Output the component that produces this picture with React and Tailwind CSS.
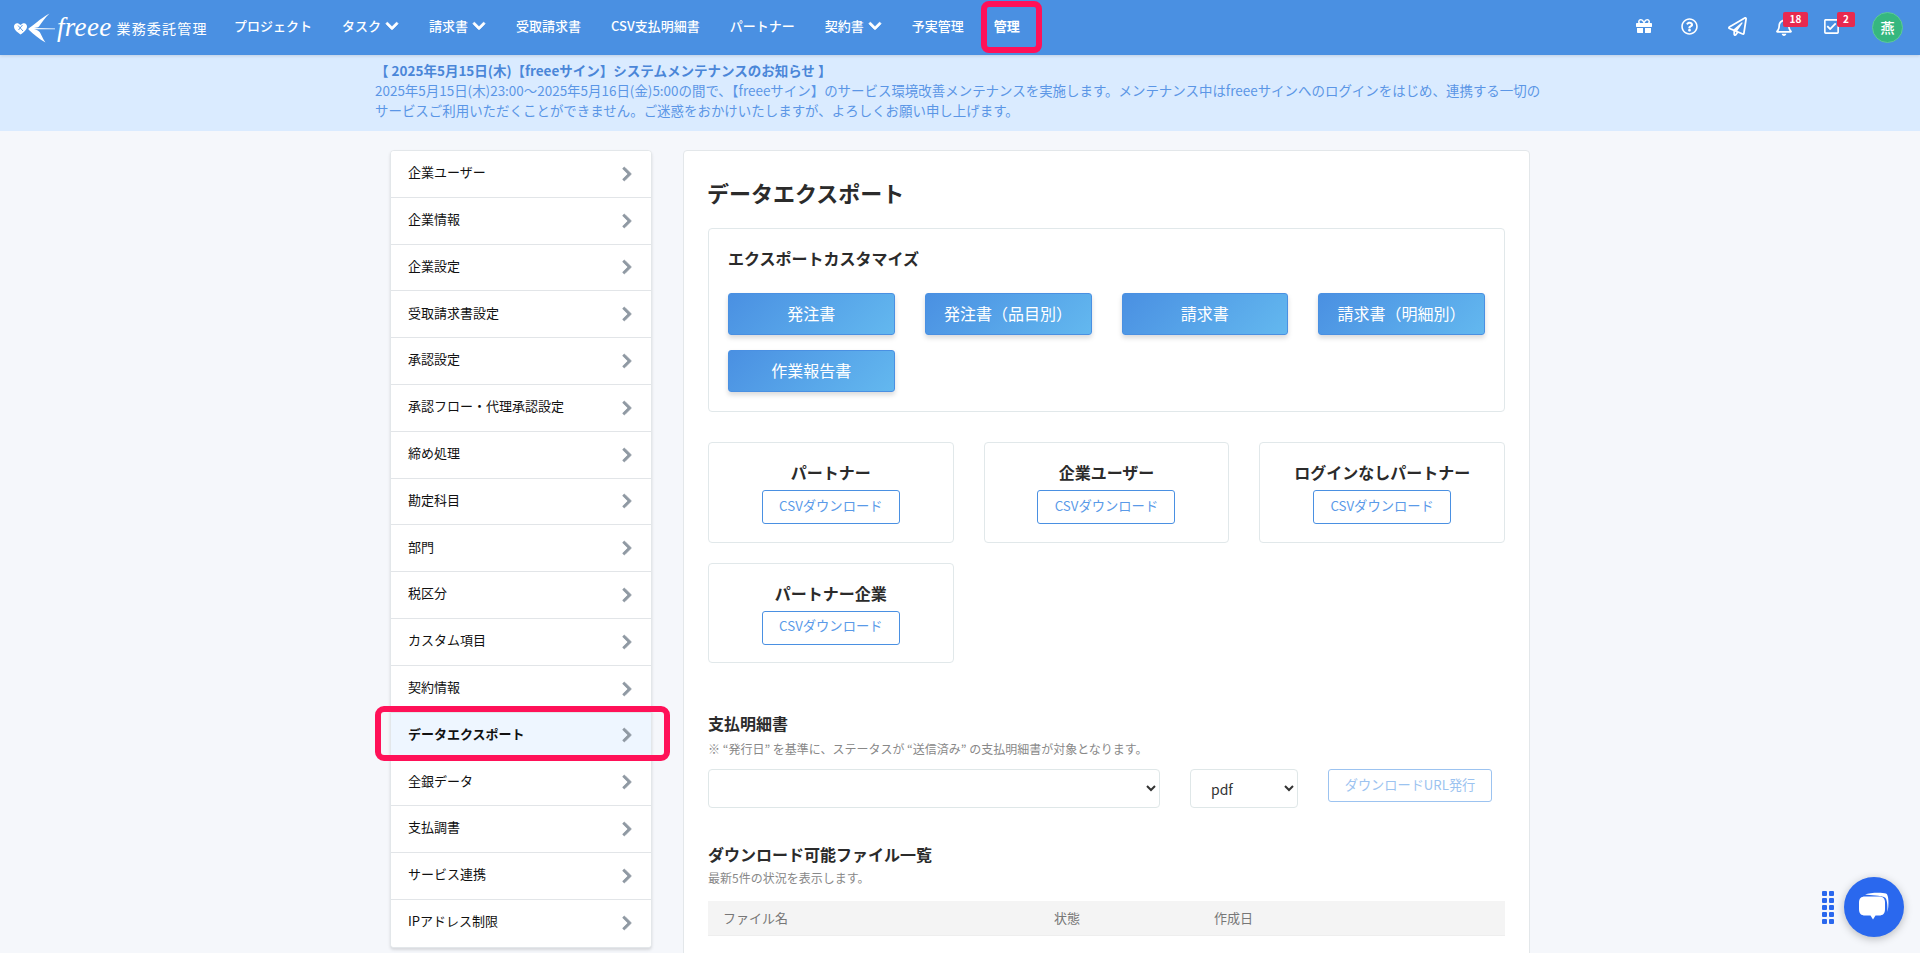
import { FaChevronDown, FaChevronRight, FaGift, FaRegQuestionCircle, FaRegPaperPlane, FaRegBell, FaRegCheckSquare } from 'react-icons/fa';

const NAV = [
  { label: 'プロジェクト' },
  { label: 'タスク', caret: true },
  { label: '請求書', caret: true },
  { label: '受取請求書' },
  { label: 'CSV支払明細書' },
  { label: 'パートナー' },
  { label: '契約書', caret: true },
  { label: '予実管理' },
  { label: '管理', bold: true },
];

const SIDE = [
  '企業ユーザー', '企業情報', '企業設定', '受取請求書設定', '承認設定', '承認フロー・代理承認設定',
  '締め処理', '勘定科目', '部門', '税区分', 'カスタム項目', '契約情報', 'データエクスポート',
  '全銀データ', '支払調書', 'サービス連携', 'IPアドレス制限',
];

const EXPORTS = ['発注書', '発注書（品目別）', '請求書', '請求書（明細別）', '作業報告書'];
const CSV_CARDS = ['パートナー', '企業ユーザー', 'ログインなしパートナー', 'パートナー企業'];

function Logo() {
  return (
    <div className="ml-[14px] w-[192px] flex items-center shrink-0">
      <svg width="42" height="30" viewBox="0 0 42 30" className="shrink-0" fill="#fff">
        {/* heart + bird */}
        <path d="M6.5 21.5 C3 19 0 16.5 0 13.5 C0 11 2.6 9.5 4.8 10.8 L6.5 12 L8.6 10.6 C10.8 9.4 13 11 13 13.4 C13 16.5 10 19 6.5 21.5 Z" />
        <path d="M4 12.5 L9 18 M8.5 12 L4.5 17" stroke="#4a90e2" strokeWidth="0.9" fill="none" />
        <path d="M14.5 15.5 C19 12.5 26 6 35.5 0.5 C31 5 27.5 9.5 25 13.5 C24 14.5 22 14.8 20 15 L41 15.4 L41 16.2 L20 16.2 C23 16.8 25 18 26 19.5 C27.5 22.5 29 26 31.5 29.5 C25 26 20 21.5 14.5 16.5 Z" />
      </svg>
      <span className="font-['Liberation_Serif',serif] italic text-[27px] leading-none text-white ml-[1px] tracking-[0.3px]">freee</span>
      <span className="ml-[5px] text-[14px] tracking-[1.2px] text-white whitespace-nowrap mt-[2px]">業務委託管理</span>
    </div>
  );
}

function Badge({ children, className }) {
  return (
    <span className={`absolute top-[12px] h-[15px] rounded-[2px] bg-[#e8294f] text-white text-[10px] font-bold leading-[13px] text-center ${className}`}>
      {children}
    </span>
  );
}

function Header() {
  return (
    <header className="relative h-[55px] shrink-0 bg-[#4a90e2] flex items-center shadow-[0_1px_3px_rgba(0,0,0,0.12)] z-10">
      <Logo />
      <nav className="ml-[28px] flex items-center gap-[30px] text-white text-[13px] -mt-[3px]">
        {NAV.map((item) => (
          <a key={item.label} className={`flex items-center whitespace-nowrap ${item.bold ? 'font-bold' : 'font-medium'}`}>
            {item.label}
            {item.caret && <FaChevronDown stroke="currentColor" strokeWidth={30} className="ml-[4px] text-[14px]" />}
          </a>
        ))}
      </nav>
      <div className="ml-auto flex items-center text-white">
        <FaGift className="absolute left-[1636px] top-[18px] text-[16px]" />
        <FaRegQuestionCircle className="absolute left-[1681px] top-[18px] text-[17px]" />
        <FaRegPaperPlane className="absolute left-[1728px] top-[17px] text-[19px]" />
        <FaRegBell className="absolute left-[1775px] top-[18px] text-[18px]" />
        <Badge className="left-[1783px] w-[25px]">18</Badge>
        <FaRegCheckSquare className="absolute left-[1823px] top-[18px] text-[17px]" />
        <Badge className="left-[1837px] w-[18px]">2</Badge>
        <div className="mr-[17px] w-[31px] h-[31px] rounded-full bg-[#36b77f] border border-[#5cc99a] flex items-center justify-center text-[14px] font-medium">燕</div>
      </div>
    </header>
  );
}

function Banner() {
  return (
    <div className="h-[76px] shrink-0 bg-[#daebff] pl-[375px] pt-[5px] text-[13.5px] leading-[20px] text-[#5b96e6]">
      <p className="font-bold text-[#4a86d8]">【 2025年5月15日(木)【freeeサイン】システムメンテナンスのお知らせ 】</p>
      <p className="whitespace-nowrap text-[13.46px]">
        2025年5月15日(木)23:00～2025年5月16日(金)5:00の間で、【freeeサイン】のサービス環境改善メンテナンスを実施します。メンテナンス中はfreeeサインへのログインをはじめ、連携する一切の
        <br />
        サービスご利用いただくことができません。ご迷惑をおかけいたしますが、よろしくお願い申し上げます。
      </p>
    </div>
  );
}

function Sidebar() {
  return (
    <aside className="w-[262px] self-start shrink-0 bg-white border border-[#e3e7ea] rounded-[4px] shadow-[0_2px_3px_rgba(0,0,0,0.12)] overflow-hidden">
      {SIDE.map((label, i) => {
        const active = label === 'データエクスポート';
        return (
          <div
            key={label}
            className={`h-[46.8px] flex items-center justify-between pl-[17px] pr-[16px] text-[13px] text-[#111] ${i < SIDE.length - 1 ? 'border-b border-[#e2e5e8]' : ''} ${active ? 'bg-[#eef6ff] font-bold' : 'bg-white'}`}
          >
            <span className="-mt-[4px]">{label}</span>
            <FaChevronRight stroke="currentColor" strokeWidth={25} className="text-[16px] text-[#8f99a3]" />
          </div>
        );
      })}
    </aside>
  );
}

function CsvCard({ title }) {
  return (
    <div className="h-[100.5px] border border-[#e1e8ea] rounded-[4px] flex flex-col items-center pt-[19px]">
      <h3 className="text-[16px] leading-[20px] font-bold text-[#2b2b2b]">{title}</h3>
      <button type="button" className="mt-[8px] w-[138px] h-[34px] border border-[#4a90e2] rounded-[3px] bg-white text-[13.3px] text-[#5a9ae8] pb-[3px]">
        CSVダウンロード
      </button>
    </div>
  );
}

function Main() {
  return (
    <main className="w-[847px] shrink-0 bg-white border border-[#e3e7ea] rounded-t-[4px] pl-[24px] pr-[24px] pt-[27px] min-h-[900px]">
      <h1 className="-ml-[1px] text-[22px] leading-[28px] font-semibold text-[#2b2b2b]">データエクスポート</h1>

      <section className="mt-[22px] h-[184px] border border-[#e1e8ea] rounded-[4px] px-[19px] pt-[18px]">
        <h2 className="text-[16px] leading-[22px] font-bold text-[#2b2b2b]">エクスポートカスタマイズ</h2>
        <div className="mt-[24px] grid grid-cols-4 gap-x-[30px] gap-y-[15px]">
          {EXPORTS.map((label) => (
            <button
              key={label}
              type="button"
              className="h-[42px] rounded-[3px] border border-[#4a90e2] bg-[linear-gradient(135deg,#4a90e2,#63b8ef)] text-white text-[16px] shadow-[0_3px_5px_rgba(0,0,0,0.15)] pb-[2px]"
            >
              {label}
            </button>
          ))}
        </div>
      </section>

      <section className="mt-[30px] grid grid-cols-3 gap-x-[30px] gap-y-[20px]">
        {CSV_CARDS.map((t) => <CsvCard key={t} title={t} />)}
      </section>

      <section className="mt-[49px]">
        <h2 className="text-[16px] leading-[22px] font-bold text-[#2b2b2b]">支払明細書</h2>
        <p className="mt-[6px] text-[12px] leading-[18px] text-[#888]">※ “発行日” を基準に、ステータスが “送信済み” の支払明細書が対象となります。</p>
        <div className="mt-[11px] flex items-start">
          <select className="w-[452px] h-[39px] border border-[#dfe7e8] rounded-[4px] bg-white text-[14px] text-[#333]">
            <option></option>
          </select>
          <select defaultValue="pdf" className="ml-[30px] w-[108px] h-[39px] border border-[#dfe7e8] rounded-[4px] bg-white pl-[16px] text-[14px] text-[#333]">
            <option value="pdf">pdf</option>
          </select>
          <button type="button" disabled className="ml-[30px] w-[164px] h-[33px] border border-[#9cc3f0] rounded-[3px] bg-white text-[13.2px] text-[#9cc3f0] pb-[2px]">
            ダウンロードURL発行
          </button>
        </div>
      </section>

      <section className="mt-[35px]">
        <h2 className="text-[16px] leading-[22px] font-bold text-[#2b2b2b]">ダウンロード可能ファイル一覧</h2>
        <p className="mt-[4px] text-[12px] leading-[18px] text-[#888]">最新5件の状況を表示します。</p>
        <table className="mt-[14px] w-full table-fixed text-left text-[13px] text-[#777]">
          <thead>
            <tr className="h-[34px] bg-[#f4f4f4] border-b border-[#eee]">
              <th className="w-[346px] pl-[15px] font-normal">ファイル名</th>
              <th className="w-[160px] font-normal">状態</th>
              <th className="font-normal">作成日</th>
            </tr>
          </thead>
        </table>
      </section>
    </main>
  );
}

function ChatWidget() {
  return (
    <div className="fixed left-[1822px] top-[877px] flex items-center gap-[10px] z-20">
      <div className="grid grid-cols-2 gap-[2px]">
        {Array.from({ length: 10 }).map((_, i) => (
          <span key={i} className="w-[5px] h-[5px] rounded-[1px] bg-[#2a68ee]" />
        ))}
      </div>
      <button type="button" className="w-[60px] h-[60px] rounded-full bg-[#2a68ee] shadow-[0_2px_8px_rgba(0,0,0,0.25)] flex items-center justify-center">
        <svg width="32" height="30" viewBox="0 0 32 30" fill="#fff">
          <path d="M7 2.5 C12 0.5 24 0.5 28 1.5 C31 2.5 31 14 29.5 20 C29.5 12 29 7 27 5.5 C23 3.5 12 3 7 2.5 Z" />
          <path d="M7 4.5 H21 C25 4.5 27 6.5 27 10.5 V17 C27 21.5 25 23.5 21 23.5 H17.5 L15 27.5 L12.5 23.5 H7 C3 23.5 1 21.5 1 17 V10.5 C1 6.5 3 4.5 7 4.5 Z" />
        </svg>
      </button>
    </div>
  );
}

export default function App() {
  return (
    <div className="relative h-screen overflow-hidden flex flex-col bg-[#f5f7fb] font-['Noto_Sans_CJK_JP','Noto_Sans',sans-serif]">
      <Header />
      <Banner />
      <div className="flex justify-center gap-[31px] pt-[19px]">
        <Sidebar />
        <Main />
      </div>
      <ChatWidget />
      {/* pink callouts drawn over the page */}
      <div className="absolute left-[981px] top-[1px] w-[61px] h-[52px] border-[6px] border-[#ff1158] rounded-[8px] pointer-events-none z-20" />
      <div className="absolute left-[375px] top-[706px] w-[295px] h-[55px] border-[6px] border-[#ff1158] rounded-[9px] pointer-events-none z-20" />
    </div>
  );
}
